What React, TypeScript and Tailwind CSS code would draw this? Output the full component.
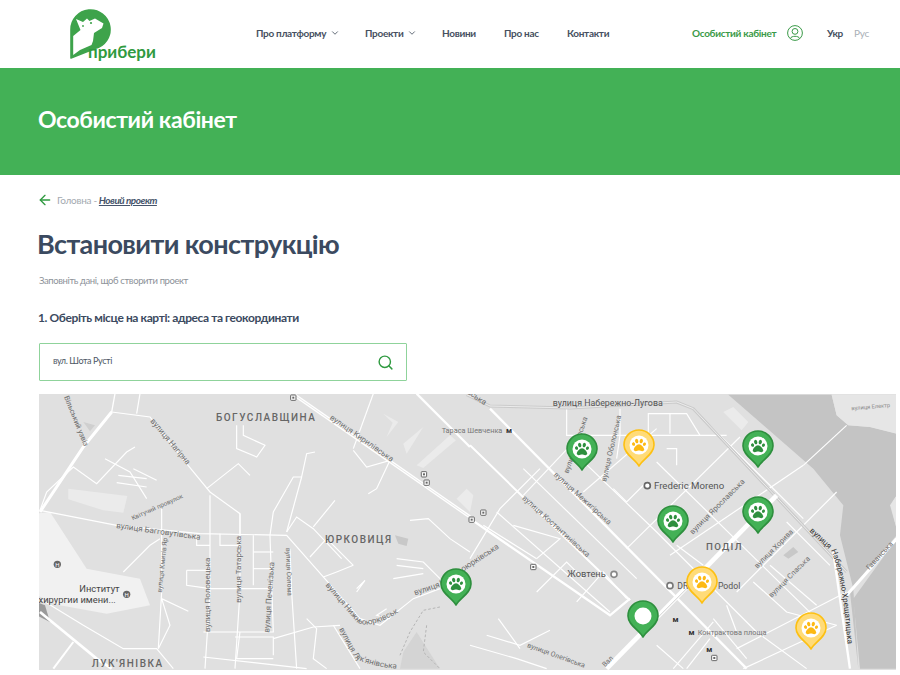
import React from "react";
import { ArrowLeft, ChevronDown, Search } from "lucide-react";
import { FaPaw } from "react-icons/fa";

const FONT = "font-['Lato','Roboto',sans-serif]";

// map geometry is in "crop" units (3x), grouped per half of the map
const leftThick: [string, number][] = [
  ["0,360 130,165 215,60", 9],
  ["130,165 215,60 225,5", 4],
  ["765,10 1290,375", 10],
  ["1130,5 1290,165", 7],
  ["0,660 170,800 215,830", 8],
  ["40,830 100,750", 6],
];

const leftThin = [
  "215,60 330,75 440,215 510,300 600,365 600,425",
  "510,310 510,600 495,830",
  "0,355 230,400 480,425 740,430 850,555 960,680 1020,700 1120,620 1200,590",
  "600,365 600,600 585,830",
  "500,290 595,215 630,250",
  "690,430 700,360 760,255 785,255 800,185 825,180",
  "740,420 785,255",
  "740,420 770,375 820,410 905,500",
  "820,405 885,325",
  "810,495 860,440 940,520",
  "365,350 365,600 355,770 390,700 365,620 445,658",
  "195,200 270,240 320,320",
  "235,250 320,260",
  "230,272 320,285",
  "280,230 350,265",
  "440,535 510,535",
  "440,535 440,580 510,590 700,590",
  "470,430 470,460 510,460",
  "540,425 540,460 600,460",
  "640,430 640,580",
  "640,480 700,480",
  "640,530 700,530",
  "690,430 700,720 490,720",
  "600,720 590,800 700,800",
  "490,795 800,830",
  "585,735 700,735 700,790",
  "700,740 820,705 900,700",
  "880,700 960,830",
  "750,470 755,600 770,830",
  "590,100 590,170 650,195 675,160 610,130 610,100",
  "940,175 980,225 1050,205 1010,290 985,305",
  "1070,500 1150,510 1200,560",
  "1070,520 1150,530",
  "1060,560 1150,545",
  "1110,385 1165,380 1230,440 1290,480",
  "0,355 20,300 100,225 170,275 260,180 285,165",
  "0,620 130,700 250,770 350,770 400,830",
  "250,540 330,460 360,440",
  "800,680 830,710 820,800 860,830",
  "1000,5 940,170",
  "300,5 290,65",
  "1050,680 1010,670 1040,650",
  "950,600 975,565 950,590",
  "850,555 890,540 940,520",
];

const rightThin = [
  "160,310 330,130",
  "340,300 560,110",
  "470,470 810,135",
  "600,490 1000,220",
  "800,600 1100,300",
  "800,770 1130,600",
  "300,170 560,420 860,720 1010,830",
  "560,210 1060,700",
  "720,100 1000,380",
  "160,230 500,560",
  "80,360 420,660",
  "290,50 290,130 770,130",
  "450,50 450,130 440,200",
  "535,130 535,65 650,65 690,130",
  "600,65 600,125",
  "0,500 90,350 210,230",
  "40,400 200,500",
  "130,400 270,440 200,500",
  "200,600 290,510 340,560",
  "320,630 400,540 470,620",
  "50,730 150,760 240,715",
  "85,680 150,770",
  "610,830 730,690",
  "650,830 720,740",
  "730,680 830,800",
  "820,830 1100,700",
  "770,640 800,720",
  "850,570 950,660 1100,700",
  "900,520 1040,640",
  "950,390 1080,520",
  "1000,220 1130,100",
  "620,220 620,170 590,170",
  "430,290 470,330 530,270",
  "620,460 700,520",
  "560,760 640,830",
  "0,760 140,800 230,830",
];

const labels: { x: number; y: number; r?: number; s?: number; t: string; c?: string; ls?: number; w?: number; side: "l" | "r" }[] = [
  { side: "l", x: 528, y: 88, s: 30, t: "БОГУСЛАВЩИНА", c: "#666", ls: 4.5, w: 500 },
  { side: "l", x: 855, y: 453, s: 30, t: "ЮРКОВИЦЯ", c: "#666", ls: 4.5, w: 500 },
  { side: "l", x: 155, y: 826, s: 30, t: "ЛУК'ЯНІВКА", c: "#666", ls: 4.5, w: 500 },
  { side: "l", x: 868, y: 80, r: 35, s: 24, t: "вулиця Кирилівська" },
  { side: "l", x: 330, y: 88, r: 50, s: 24, t: "вулиця Нагірна" },
  { side: "l", x: 228, y: 408, r: 8, s: 24, t: "вулиця Багговутівська" },
  { side: "l", x: 278, y: 385, r: -24, s: 19, t: "Квітучий провулок" },
  { side: "l", x: 365, y: 602, r: -84, s: 20, t: "вулиця Кмитів Яр" },
  { side: "l", x: 510, y: 720, r: -90, s: 24, t: "вулиця Половецька" },
  { side: "l", x: 602, y: 632, r: -90, s: 24, t: "вулиця Татарська" },
  { side: "l", x: 688, y: 722, r: -86, s: 24, t: "вулиця Печенізька" },
  { side: "l", x: 738, y: 468, r: 88, s: 20, t: "вулиця Солома" },
  { side: "l", x: 72, y: 15, r: 68, s: 22, t: "Вільський узвіз" },
  { side: "l", x: 1205, y: 122, s: 22, t: "Тараса Шевченка", c: "#777" },
  { side: "l", x: 118, y: 601, s: 28, t: "Институт", c: "#444" },
  { side: "l", x: -20, y: 634, s: 28, t: "охирургии имени...", c: "#444" },
  { side: "r", x: 248, y: 42, s: 26.5, t: "вулиця Набережно-Лугова", c: "#555" },
  { side: "r", x: 552, y: 291, s: 29, t: "Frederic Moreno", c: "#555" },
  { side: "r", x: 250, y: 250, r: 42, s: 23, t: "вулиця Межигірська" },
  { side: "r", x: 155, y: 320, r: 42, s: 23, t: "вулиця Костянтинівська" },
  { side: "r", x: 408, y: 270, r: -77, s: 22, t: "вулиця Оболонська" },
  { side: "r", x: 295, y: 245, r: -71, s: 22, t: "вулиця Волоська" },
  { side: "r", x: 668, y: 428, r: -45, s: 23, t: "вулиця Ярославська" },
  { side: "r", x: 708, y: 474, s: 29, t: "ПОДІЛ", c: "#666", ls: 4, w: 500 },
  { side: "r", x: 862, y: 530, r: -45, s: 22, t: "вулиця Хорива" },
  { side: "r", x: 905, y: 618, r: -45, s: 22, t: "вулиця Спаська" },
  { side: "r", x: 292, y: 556, s: 28, t: "Жовтень", c: "#555" },
  { side: "r", x: 622, y: 592, s: 26, t: "DR", c: "#555" },
  { side: "r", x: 744, y: 592, s: 26, t: "Podol", c: "#555" },
  { side: "r", x: 683, y: 728, s: 22, t: "Контрактова площа", c: "#777" },
  { side: "r", x: 170, y: 765, r: 20, s: 21, t: "вулиця Олегівська" },
  { side: "r", x: 1198, y: 535, r: -47, s: 22, t: "Гаванська" },
  { side: "r", x: 1145, y: 55, r: -5, s: 17, t: "вулиця Електр", c: "#888" },
  { side: "r", x: 405, y: 826, r: -45, s: 21, t: "Вал" },
  { side: "r", x: -143, y: -90, r: 35, s: 24, t: "вулиця Кирилівська" },
];

// small map markers, crop units again
const shields = [[760, 17, "l"], [1152, 247, "l"], [1160, 272, "l"], [40, 362, "r"], [5, 383, "r"], [190, 525, "r"], [733, 798, "r"]] as const;
const metros = [[117, 115], [617, 682], [665, 720], [718, 772]];

const MapLabel = ({ l }: { l: (typeof labels)[number] }) => (
  <text
    x={l.x}
    y={l.y}
    fontSize={l.s}
    fill={l.c || "#6e6e6e"}
    letterSpacing={l.ls}
    fontWeight={l.w}
    transform={l.r ? `rotate(${l.r} ${l.x} ${l.y})` : undefined}
  >
    {l.t}
  </text>
);

const Shield = ({ x, y }: { x: number; y: number }) => (
  <g>
    <rect x={x - 8} y={y - 8} width="16" height="16" rx="2" fill="#fff" stroke="#666" strokeWidth="3" />
    <rect x={x - 3} y={y - 3} width="6" height="6" fill="#666" />
  </g>
);

const Pin = ({ x, top, kind }: { x: number; top: number; kind: "green" | "yellow" | "active" }) => {
  const yellow = kind === "yellow";
  return (
    <div className="absolute w-[32px] h-[38px]" style={{ left: x - 16 - 39, top: top - 394 }}>
      <svg viewBox="0 0 32 38" className="w-[32px] h-[38px]">
        <path
          d="M16 37 C12 30 1 25 1 16 A15 15 0 0 1 31 16 C31 25 20 30 16 37Z"
          fill={yellow ? "#ffdb78" : "#43b156"}
          stroke={yellow ? "#fdc013" : "#2e8f3e"}
          strokeWidth="1.6"
          strokeLinejoin="round"
        />
        <circle cx="16" cy="16" r={yellow ? 9.5 : kind === "active" ? 8.5 : 9.5} fill="#fff" />
      </svg>
      {kind !== "active" && (
        <FaPaw
          className={`absolute left-[9px] top-[9px] w-[14px] h-[14px] ${yellow ? "text-[#fdb913]" : "text-[#2e8f3e]"}`}
        />
      )}
    </div>
  );
};

const Logo = () => (
  <div className="relative w-[90px] h-[52px]">
    <svg viewBox="0 0 90 52" className="absolute left-0 top-0 w-[90px] h-[52px]">
      <path
        d="M1 49 L1 21 A19.5 19.5 0 1 1 25 39.5 L1 49Z"
        fill="#3ea34b"
        stroke="#3ea34b"
        strokeWidth="1.6"
        strokeLinejoin="round"
      />
      <path
        d="M3.2 46 L3.2 27 L10.5 21 L6 10 L13 13 L17 9.5 L19.5 12 L25 9.5 L33.5 14.5 L32 19 L24 24 L23 32 L21.5 36 L10 41Z"
        fill="#fff"
      />
      <circle cx="21" cy="14" r="1.1" fill="#3ea34b" />
      <circle cx="13" cy="17" r="0.9" fill="#3ea34b" />
    </svg>
    <span className="absolute left-[18px] top-[33px] text-[#2f9a40] text-[17px] leading-[20px] font-bold whitespace-nowrap">
      прибери
    </span>
  </div>
);

export default function App() {
  return (
    <div className={`${FONT} bg-white w-[900px] h-[675px] overflow-hidden text-[#3b4a60]`}>
      <header className="h-[68px] flex items-center">
        <div className="ml-[70px] mt-[1px] w-[186px]">
          <Logo />
        </div>
        <nav className="flex items-center -mt-[2px] text-[10px] tracking-[-0.3px] font-bold text-[#46505f] whitespace-nowrap">
          <span className="flex items-center w-[109px]">
            Про платформу
            <ChevronDown className="ml-[4px] w-[10px] h-[10px]" />
          </span>
          <span className="flex items-center w-[77px]">
            Проекти
            <ChevronDown className="ml-[4px] w-[10px] h-[10px]" />
          </span>
          <span className="w-[62px]">Новини</span>
          <span className="w-[63px]">Про нас</span>
          <span className="w-[125px]">Контакти</span>
        </nav>
        <div className="flex items-center -mt-[2px] text-[10px] tracking-[-0.3px] font-bold whitespace-nowrap">
          <span className="text-[#3a9a48] w-[95px]">Особистий кабінет</span>
          <svg viewBox="0 0 16 16" className="w-[16px] h-[16px] text-[#3a9a48]" fill="none" stroke="currentColor" strokeWidth="1">
            <circle cx="8" cy="8" r="7.4" />
            <circle cx="8" cy="6.4" r="2.9" />
            <path d="M3.3 13.4 C4.5 10.6 11.5 10.6 12.7 13.4" />
          </svg>
          <span className="ml-[24px] w-[27px] text-[#46505f]">Укр</span>
          <span className="text-[#a9afb6] font-normal">Рус</span>
        </div>
      </header>

      <section className="h-[107px] bg-[#43b156] flex items-center pl-[38px] pb-[4px]">
        <h2 className="text-white text-[23px] tracking-[-0.4px] font-bold">Особистий кабінет</h2>
      </section>

      <div className="pl-[37px] pt-[17px] flex items-center h-[33px] text-[10px] tracking-[-0.3px] whitespace-nowrap">
        <ArrowLeft className="w-[16px] h-[16px] text-[#2f9a40]" strokeWidth={2} />
        <span className="ml-[4px] text-[#a3a9b0]">Головна -</span>
        <span className="ml-[2px] italic font-bold text-[#46546b] underline tracking-[-0.5px]">Новий проект</span>
      </div>

      <h1 className="ml-[37px] mt-[18px] text-[27px] tracking-[-0.6px] leading-[36px] font-bold text-[#3b4a60]">
        Встановити конструкцію
      </h1>

      <p className="ml-[39px] mt-[12px] text-[9.5px] tracking-[-0.4px] leading-[14px] text-[#8d9299]">
        Заповніть дані, щоб створити проект
      </p>

      <h3 className="ml-[38px] mt-[21px] text-[12px] tracking-[-0.4px] leading-[18px] font-bold text-[#3b4a60]">
        1. Оберіть місце на карті: адреса та геокординати
      </h3>

      <div className="ml-[39px] mt-[16px] w-[368px] h-[38px] border border-[#8fd39b] rounded-[1px] flex items-center justify-between pl-[13px] pr-[12px]">
        <span className="text-[9px] tracking-[-0.4px] text-[#4e5765] -mt-[2px]">вул. Шота Русті</span>
        <Search className="w-[17px] h-[17px] text-[#2f9a40]" strokeWidth={2} />
      </div>

      <div className="relative ml-[39px] mt-[13px] w-[857px] h-[276px] overflow-hidden bg-[#e0e0e0]">
        <svg viewBox="39 394 857 276" className="w-[857px] h-[276px]" fill="none" fontFamily="Roboto, sans-serif">
          <defs>
            <path id="road-yurk" d="M856,580 L950,690 Q985,715 1075,662" />
            <path id="road-luk" d="M897,712 L945,800 Q1000,825 1070,830" />
            <path id="road-east" d="M1125,610 L1200,585 L1375,470" />
            <path id="road-khr" d="M1018,418 L1085,480 Q1120,560 1135,790" />
          </defs>
          <g transform="translate(40 392) scale(0.3333)">
            <path d="M-10,365 L30,360 L140,530 L300,560 L330,640 L200,665 L60,640 L-10,610Z" fill="#f1f1f1" />
            <path d="M-10,630 L15,640 L30,690 L-10,670Z" fill="#9a9a9a" />
            <path d="M85,290 L262,312 L250,362 L190,355 L85,322Z" fill="#ebebeb" />
            <path d="M1130,220 L1230,130 L1248,145 L1150,228Z" fill="#ebebeb" />
            <path d="M1030,65 L1075,90 L1040,135 L1058,92Z" fill="#ebebeb" />
            <path d="M1090,155 L1150,105 L1100,185Z" fill="#ebebeb" />
            <path d="M1250,320 L1280,290 L1300,310 L1290,360Z" fill="#ebebeb" />
            <path d="M130,90 L165,100 L150,118Z" fill="#cfcfcf" />
            <path d="M1065,430 L1105,440 L1100,462 L1075,455Z" fill="#c8c8c8" />
            <path d="M1080,830 L1090,780 L1130,720 L1200,830Z" fill="#d4d4d4" />
            <path d="M1200,645 L1150,655 L1110,720 L1080,790 M1160,700 L1150,780 L1200,830" stroke="#b5b5b5" strokeWidth="3" strokeDasharray="8 6" />
            {leftThin.map((p) => (
              <polyline key={p} points={p} stroke="#fff" strokeWidth="3.5" />
            ))}
            {leftThick.map(([p, w]) => (
              <polyline key={p} points={p} stroke="#fff" strokeWidth={w} />
            ))}
            <polyline points="765,10 1290,375" stroke="#d5d5d5" strokeWidth="1.5" />
            {labels.filter((l) => l.side === "l").map((l) => (
              <MapLabel key={l.t} l={l} />
            ))}
            <text fontSize="24" fill="#6e6e6e"><textPath href="#road-yurk">вулиця Нижньоюрківська</textPath></text>
            <text fontSize="24" fill="#6e6e6e"><textPath href="#road-luk">вулиця Лук'янівська</textPath></text>
            <text fontSize="24" fill="#6e6e6e"><textPath href="#road-east">вулиця Нижньоюрківська</textPath></text>
            <circle cx="52" cy="517" r="11" fill="#666" />
            <circle cx="260" cy="607" r="11" fill="#666" />
            <text x="52" y="524" fontSize="18" fill="#fff" textAnchor="middle">H</text>
            <text x="260" y="614" fontSize="18" fill="#fff" textAnchor="middle">H</text>
            {shields.filter((s) => s[2] === "l").map((s) => (
              <Shield key={s[0]} x={s[0]} y={s[1]} />
            ))}
          </g>
          <g transform="translate(470 392) scale(0.3333)">
            <path
              d="M775,8 L1085,8 L1100,70 L1135,100 L1200,105 L1280,125 L1280,310 L1260,340 L1280,410 L1280,430 L1140,600 L1165,830 L1280,830 L1280,830 L1165,830 L1150,590 L1110,430 L1120,340 L1030,230Z"
              fill="#c4c4c4"
            />
            <path d="M1085,8 L1280,8 L1280,125 L1200,105 L1135,100 L1100,70Z" fill="#e6e6e6" />
            <path d="M1150,620 L1280,440 L1280,830 L1170,830Z" fill="#c4c4c4" />
            <path d="M1280,310 L1262,340 L1280,410Z" fill="#e6e6e6" />
            <path d="M760,60 L790,45 L835,90 L815,115Z" fill="#ebebeb" />
            <path d="M940,490 L970,465 L985,480 L955,500Z" fill="#c8c8c8" />
            {rightThin.map((p) => (
              <polyline key={p} points={p} stroke="#fff" strokeWidth="3.5" />
            ))}
            <polyline points="-10,8 60,42 300,48 620,30 670,50 1130,540" stroke="#cacaca" strokeWidth="9" />
            <polyline points="-10,8 60,42 300,48 620,30 670,50 1130,540" stroke="#ececec" strokeWidth="3" />
            <polyline points="60,50 830,830" stroke="#fff" strokeWidth="7" />
            <polyline points="0,160 360,510 480,625" stroke="#fff" strokeWidth="6" />
            <polyline points="0,380 420,670 480,620" stroke="#fff" strokeWidth="7" />
            <polyline points="410,830 920,310" stroke="#fff" strokeWidth="14" />
            <polyline points="560,680 700,540" stroke="#cfcfcf" strokeWidth="3" />
            <polyline points="1090,480 1140,830" stroke="#fff" strokeWidth="7" />
            <polyline points="1130,610 1280,440" stroke="#fff" strokeWidth="9" />
            <circle cx="532" cy="281" r="9" stroke="#666" strokeWidth="5" fill="#fff" />
            <circle cx="432" cy="547" r="9" stroke="#888" strokeWidth="5" fill="#fff" />
            <circle cx="600" cy="581" r="9" stroke="#777" strokeWidth="5" fill="#fff" />
            {labels.filter((l) => l.side === "r").map((l) => (
              <MapLabel key={l.t} l={l} />
            ))}
            <text fontSize="24" fill="#333"><textPath href="#road-khr">вулиця Набережно-Хрещатицька</textPath></text>
            {metros.map(([x, y]) => (
              <text key={x} x={x} y={y + 9} fontSize="24" fontWeight="700" fill="#333" textAnchor="middle">м</text>
            ))}
            {shields.filter((s) => s[2] === "r").map((s) => (
              <Shield key={s[0]} x={s[0]} y={s[1]} />
            ))}
          </g>
        </svg>
        <Pin x={456} top={568} kind="green" />
        <Pin x={581.5} top={433} kind="green" />
        <Pin x={639} top={429} kind="yellow" />
        <Pin x={757.5} top={429.5} kind="green" />
        <Pin x={673} top={505} kind="green" />
        <Pin x={757.5} top={496} kind="green" />
        <Pin x={702} top={566} kind="yellow" />
        <Pin x={811} top={612} kind="yellow" />
        <Pin x={643} top={600} kind="active" />
      </div>
    </div>
  );
}
